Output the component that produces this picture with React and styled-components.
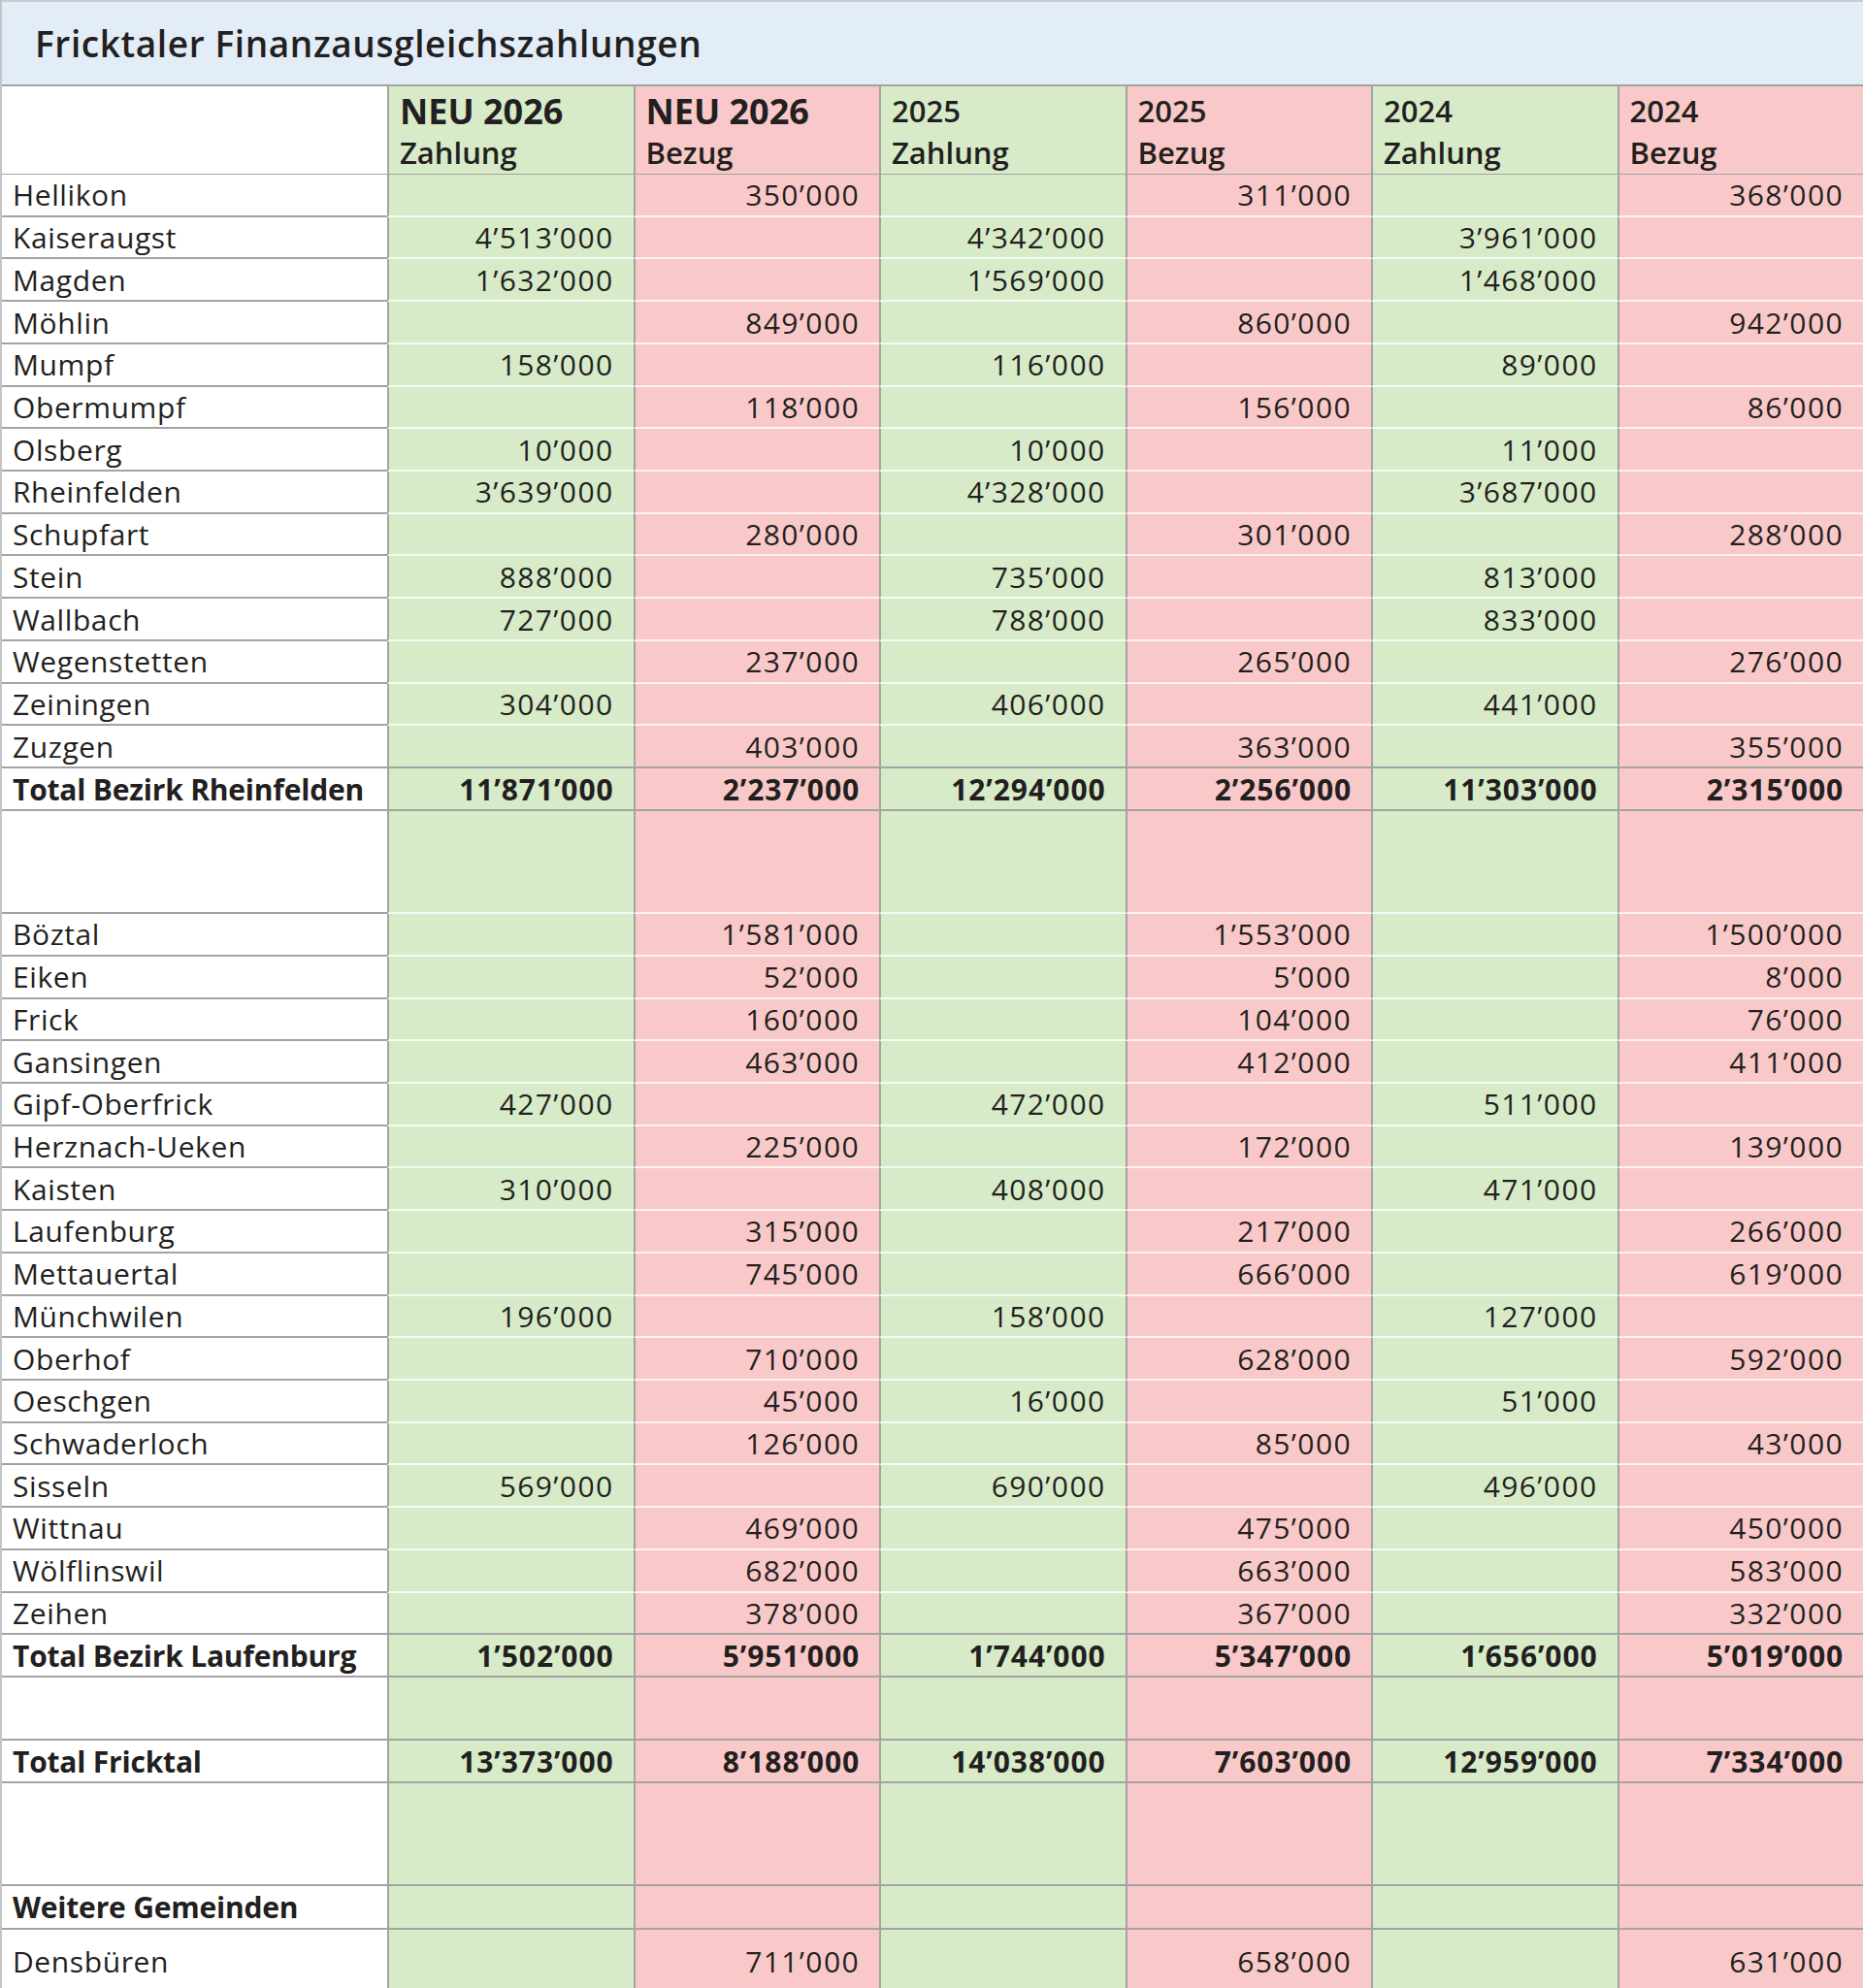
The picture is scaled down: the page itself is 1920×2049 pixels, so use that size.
import React from "react";
import styled, { createGlobalStyle } from "styled-components";

const GlobalStyle = createGlobalStyle`
  html, body {
    margin: 0;
    padding: 0;
    background: #ffffff;
  }
  body {
    font-family: "Open Sans", "Liberation Sans", sans-serif;
    color: #231f20;
  }
`;

const GREY = "#a3a3a3";
const LIGHT = "rgba(255, 255, 255, 0.75)";
const GREEN = "#d7ebc9";
const PINK = "#f9c9c9";

const COLUMNS = [
  { year: "NEU 2026", kind: "Zahlung", big: true },
  { year: "NEU 2026", kind: "Bezug", big: true },
  { year: "2025", kind: "Zahlung" },
  { year: "2025", kind: "Bezug" },
  { year: "2024", kind: "Zahlung" },
  { year: "2024", kind: "Bezug" },
];

const RHEINFELDEN = [
  ["Hellikon", "", "350’000", "", "311’000", "", "368’000"],
  ["Kaiseraugst", "4’513’000", "", "4’342’000", "", "3’961’000", ""],
  ["Magden", "1’632’000", "", "1’569’000", "", "1’468’000", ""],
  ["Möhlin", "", "849’000", "", "860’000", "", "942’000"],
  ["Mumpf", "158’000", "", "116’000", "", "89’000", ""],
  ["Obermumpf", "", "118’000", "", "156’000", "", "86’000"],
  ["Olsberg", "10’000", "", "10’000", "", "11’000", ""],
  ["Rheinfelden", "3’639’000", "", "4’328’000", "", "3’687’000", ""],
  ["Schupfart", "", "280’000", "", "301’000", "", "288’000"],
  ["Stein", "888’000", "", "735’000", "", "813’000", ""],
  ["Wallbach", "727’000", "", "788’000", "", "833’000", ""],
  ["Wegenstetten", "", "237’000", "", "265’000", "", "276’000"],
  ["Zeiningen", "304’000", "", "406’000", "", "441’000", ""],
  ["Zuzgen", "", "403’000", "", "363’000", "", "355’000"],
];

const LAUFENBURG = [
  ["Böztal", "", "1’581’000", "", "1’553’000", "", "1’500’000"],
  ["Eiken", "", "52’000", "", "5’000", "", "8’000"],
  ["Frick", "", "160’000", "", "104’000", "", "76’000"],
  ["Gansingen", "", "463’000", "", "412’000", "", "411’000"],
  ["Gipf-Oberfrick", "427’000", "", "472’000", "", "511’000", ""],
  ["Herznach-Ueken", "", "225’000", "", "172’000", "", "139’000"],
  ["Kaisten", "310’000", "", "408’000", "", "471’000", ""],
  ["Laufenburg", "", "315’000", "", "217’000", "", "266’000"],
  ["Mettauertal", "", "745’000", "", "666’000", "", "619’000"],
  ["Münchwilen", "196’000", "", "158’000", "", "127’000", ""],
  ["Oberhof", "", "710’000", "", "628’000", "", "592’000"],
  ["Oeschgen", "", "45’000", "16’000", "", "51’000", ""],
  ["Schwaderloch", "", "126’000", "", "85’000", "", "43’000"],
  ["Sisseln", "569’000", "", "690’000", "", "496’000", ""],
  ["Wittnau", "", "469’000", "", "475’000", "", "450’000"],
  ["Wölflinswil", "", "682’000", "", "663’000", "", "583’000"],
  ["Zeihen", "", "378’000", "", "367’000", "", "332’000"],
];

const TOTAL_R = ["Total Bezirk Rheinfelden", "11’871’000", "2’237’000", "12’294’000", "2’256’000", "11’303’000", "2’315’000"];
const TOTAL_L = ["Total Bezirk Laufenburg", "1’502’000", "5’951’000", "1’744’000", "5’347’000", "1’656’000", "5’019’000"];
const TOTAL_F = ["Total Fricktal", "13’373’000", "8’188’000", "14’038’000", "7’603’000", "12’959’000", "7’334’000"];
const EMPTY = ["", "", "", "", "", "", ""];

const Sheet = styled.div`
  width: 1920px;
  border-left: 2px solid #c4c4c4;
  box-sizing: border-box;
`;

const TitleBar = styled.div`
  height: 89px;
  box-sizing: border-box;
  background: #e2edf8;
  border-top: 2px solid #c9cdd2;
  border-bottom: 2px solid ${GREY};
  display: flex;
  align-items: center;
  padding-left: 34px;
`;

const Title = styled.h1`
  margin: 0;
  font-size: 37px;
  font-weight: 600;
  letter-spacing: 0.6px;
  color: #231f20;
`;

const Row = styled.div`
  display: grid;
  grid-template-columns: 397px repeat(6, 1fr);
  height: ${(p) => p.$height}px;
`;

const NameCell = styled.div`
  box-sizing: border-box;
  display: flex;
  align-items: center;
  padding-left: 11px;
  background: #ffffff;
  border-bottom: 2px solid ${GREY};
  font-size: 30px;
  font-weight: ${(p) => (p.$bold ? 700 : 400)};
  letter-spacing: ${(p) => (p.$bold ? "-0.2px" : "0.6px")};
  white-space: nowrap;
`;

const ValueCell = styled.div`
  box-sizing: border-box;
  display: flex;
  align-items: center;
  justify-content: flex-end;
  padding-right: 20px;
  background: ${(p) => (p.$tone === "pay" ? GREEN : PINK)};
  border-left: 2px solid ${GREY};
  border-bottom: 2px solid ${(p) => (p.$rule === "grey" ? GREY : LIGHT)};
  font-size: 30px;
  font-weight: ${(p) => (p.$bold ? 700 : 400)};
  letter-spacing: ${(p) => (p.$bold ? "0.9px" : "1.4px")};
  white-space: nowrap;
`;

const HeadCell = styled.div`
  box-sizing: border-box;
  display: flex;
  flex-direction: column;
  justify-content: flex-start;
  padding: 4px 0 0 11px;
  background: ${(p) => (p.$tone === "pay" ? GREEN : PINK)};
  border-left: 2px solid ${GREY};
  border-bottom: 2px solid ${GREY};
`;

const HeadYear = styled.span`
  font-size: ${(p) => (p.$big ? 36 : 31)}px;
  font-weight: ${(p) => (p.$big ? 700 : 600)};
  line-height: 43px;
`;

const HeadKind = styled.span`
  font-size: 31px;
  font-weight: 600;
  line-height: 43px;
`;

function TableRow({ cells, height = 43.72, bold, rule = "light" }) {
  const [name, ...values] = cells;
  return (
    <Row $height={height}>
      <NameCell $bold={bold}>{name}</NameCell>
      {values.map((v, i) => (
        <ValueCell key={i} $tone={i % 2 === 0 ? "pay" : "get"} $rule={rule} $bold={bold}>
          {v}
        </ValueCell>
      ))}
    </Row>
  );
}

function Group({ rows }) {
  return rows.map((r, i) => (
    <TableRow key={r[0]} cells={r} rule={i === rows.length - 1 ? "grey" : "light"} />
  ));
}

export default function App() {
  return (
    <>
      <GlobalStyle />
      <Sheet>
        <TitleBar>
          <Title>Fricktaler Finanzausgleichszahlungen</Title>
        </TitleBar>
        <Row $height={91}>
          <NameCell />
          {COLUMNS.map((c, i) => (
            <HeadCell key={i} $tone={i % 2 === 0 ? "pay" : "get"}>
              <HeadYear $big={c.big}>{c.year}</HeadYear>
              <HeadKind>{c.kind}</HeadKind>
            </HeadCell>
          ))}
        </Row>
        <Group rows={RHEINFELDEN} />
        <TableRow cells={TOTAL_R} bold rule="grey" height={44} />
        <TableRow cells={EMPTY} height={106} />
        <Group rows={LAUFENBURG} />
        <TableRow cells={TOTAL_L} bold rule="grey" height={44} />
        <TableRow cells={EMPTY} rule="grey" height={65} />
        <TableRow cells={TOTAL_F} bold rule="grey" height={44} />
        <TableRow cells={EMPTY} rule="grey" height={106} />
        <TableRow cells={["Weitere Gemeinden", "", "", "", "", "", ""]} bold rule="grey" height={45} />
        <TableRow cells={["Densbüren", "", "711’000", "", "658’000", "", "631’000"]} height={66} />
      </Sheet>
    </>
  );
}
